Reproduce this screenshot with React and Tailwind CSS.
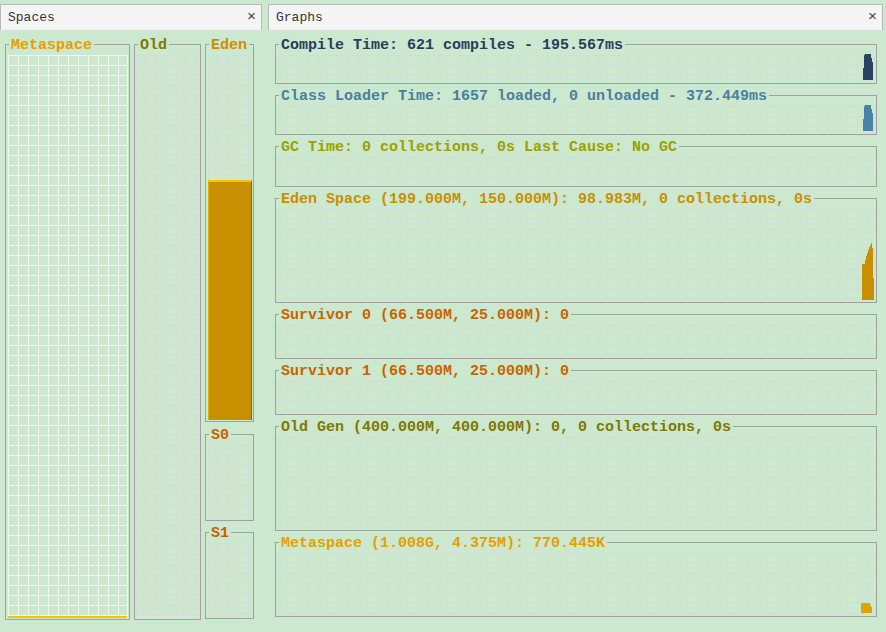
import React from 'react';

// цвета как в VisualGC
const GRID = 'bg-[linear-gradient(to_right,#d7dcd3_1px,transparent_1px),linear-gradient(to_bottom,#d7dcd3_1px,transparent_1px)] bg-[size:10px_10px]';
const GRID_WHITE = 'bg-[linear-gradient(to_right,#f2f4f2_1px,transparent_1px),linear-gradient(to_bottom,#f2f4f2_1px,transparent_1px)] bg-[size:10px_10px]';

const graphs = [
  { title: 'Compile Time: 621 compiles - 195.567ms', color: 'text-[#2a3c5a]', h: 'h-[47px]', bar: 'compile' },
  { title: 'Class Loader Time: 1657 loaded, 0 unloaded - 372.449ms', color: 'text-[#4a7ea2]', h: 'h-[47px]', bar: 'loader' },
  { title: 'GC Time: 0 collections, 0s Last Cause: No GC', color: 'text-[#9ca000]', h: 'h-[48px]' },
  { title: 'Eden Space (199.000M, 150.000M): 98.983M, 0 collections, 0s', color: 'text-[#c89000]', h: 'h-[112px]', bar: 'eden' },
  { title: 'Survivor 0 (66.500M, 25.000M): 0', color: 'text-[#c86400]', h: 'h-[52px]' },
  { title: 'Survivor 1 (66.500M, 25.000M): 0', color: 'text-[#c86400]', h: 'h-[52px]' },
  { title: 'Old Gen (400.000M, 400.000M): 0, 0 collections, 0s', color: 'text-[#807800]', h: 'h-[112px]' },
  { title: 'Metaspace (1.008G, 4.375M): 770.445K', color: 'text-[#e4a000]', h: 'h-[82px]', bar: 'meta' },
];

const Bar = ({ kind }) => {
  if (kind === 'compile' || kind === 'loader') {
    const fill = kind === 'compile' ? '#2b4262' : '#4a80a6';
    return (
      <svg width="10" height="26" className="mr-[2px] mb-[1px] shrink-0">
        <polygon points="0,26 0,14 1,14 1,2 2,0 8,0 8,4 9,4 9,8 10,8 10,26" fill={fill} />
      </svg>
    );
  }
  if (kind === 'eden') {
    return (
      <svg width="12" height="57" className="mr-[1px] shrink-0">
        <polygon
          points="0,57 0,21 3,21 3,17 4,17 4,13 5,13 5,10 6,10 6,7 7,7 7,4 8,4 8,2 9,2 9,0 10,0 10,5 11,5 11,35 12,35 12,57"
          fill="#c89000"
        />
      </svg>
    );
  }
  if (kind === 'meta') {
    return (
      <svg width="12" height="10" className="mr-[2px] mb-[1px] shrink-0">
        <polygon points="0,10 0,0 9,0 10,4 11,4 11,10" fill="#e4a000" />
      </svg>
    );
  }
  return null;
};

// titled border like Swing TitledBorder
const Box = ({ title, color, className, children, inner }) => (
  <div className={`flex flex-col min-w-0 ${className}`}>
    <div className="h-[14px] flex shrink-0">
      <div className="w-[4px] h-[7px] self-end border-l border-t border-[#a0a0a0]" />
      <span className={`px-[2px] leading-[14px] text-[15px] font-bold whitespace-nowrap translate-y-[2px] ${color}`}>{title}</span>
      <div className="flex-1 h-[7px] self-end border-r border-t border-[#a0a0a0]" />
    </div>
    <div className="flex-1 flex flex-col min-h-0 border-x border-b border-[#a0a0a0]">
      {inner !== undefined ? inner : (
        <div className="flex-1 pt-[4px] px-[1px] pb-[2px] flex min-h-0">
          <div className={`flex-1 flex justify-end items-end ${GRID}`}>{children}</div>
        </div>
      )}
    </div>
  </div>
);

const Tab = ({ label }) => (
  <div className="h-[26px] shrink-0 bg-[#f5f5f5] border border-b-0 border-[#b8b8b8] flex items-center justify-between pl-[7px] pr-[5px] text-[13px] text-[#333]">
    <span>{label}</span>
    <span className="text-[15px] leading-none text-[#444]">×</span>
  </div>
);

const SmallGrid = ({ className = '' }) => (
  <div className="flex-1 pt-[4px] pl-[2px] pr-[1px] pb-[1px] flex min-h-0">
    <div className={`flex-1 border-r border-[#d7dcd3] ${GRID} ${className}`} />
  </div>
);

export default function App() {
  return (
    <div className="h-[632px] w-[886px] bg-[#cce8cf] flex gap-[6px] pt-1 overflow-hidden font-['Liberation_Mono',monospace]">
      {/* Spaces */}
      <div className="w-[262px] flex flex-col">
        <Tab label="Spaces" />
        <div className="flex gap-[4px] pl-[5px] pt-[7px]">
          <Box
            title="Metaspace"
            color="text-[#e4a000]"
            className="w-[125px] h-[583px]"
            inner={
              <div className="flex-1 pt-[4px] pl-[2px] pr-[1px] pb-[1px] flex min-h-0">
                <div className={`flex-1 flex flex-col justify-end border-r border-[#f2f4f2] ${GRID_WHITE}`}>
                  <div className="h-[2px] bg-[#f0c800]" />
                </div>
              </div>
            }
          />
          <Box
            title="Old"
            color="text-[#807800]"
            className="w-[67px] h-[583px]"
            inner={
              <div className="flex-1 pt-[4px] px-[1px] pb-[1px] flex min-h-0">
                <div className={`flex-1 border-b-2 border-[#dde2da] ${GRID}`} />
              </div>
            }
          />
          <div className="w-[49px] flex flex-col">
            <Box
              title="Eden"
              color="text-[#c89000]"
              className="h-[385px]"
              inner={
                <div className="flex-1 pt-[4px] pl-[2px] pr-[1px] pb-[1px] flex min-h-0">
                  <div className={`flex-1 flex flex-col justify-end ${GRID}`}>
                    <div className="h-[240px] bg-[#c89000] border-t-2 border-t-[#f0c800] border-l border-l-[#e0b000] border-r border-r-[#806000]" />
                  </div>
                </div>
              }
            />
            <Box title="S0" color="text-[#c86400]" className="h-[94px] mt-[5px]" inner={<SmallGrid />} />
            <Box title="S1" color="text-[#c86400]" className="h-[94px] mt-[4px]" inner={<SmallGrid />} />
          </div>
        </div>
      </div>

      {/* Graphs */}
      <div className="w-[615px] flex flex-col">
        <Tab label="Graphs" />
        <div className="flex flex-col gap-[4px] pl-[7px] pr-[6px] pt-[7px]">
          {graphs.map(g => (
            <Box key={g.title} title={g.title} color={g.color} className={g.h}>
              {g.bar && <Bar kind={g.bar} />}
            </Box>
          ))}
        </div>
      </div>
    </div>
  );
}
